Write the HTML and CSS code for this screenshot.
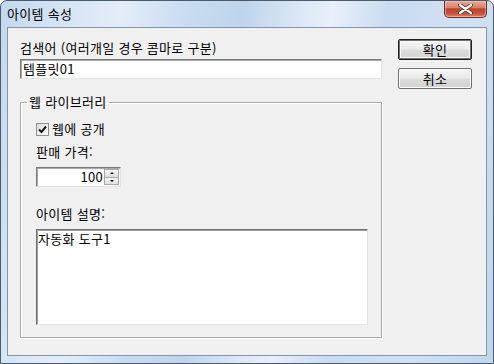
FILE: index.html
```html
<!DOCTYPE html>
<html lang="ko">
<head>
<meta charset="utf-8">
<title>아이템 속성</title>
<link rel="stylesheet" href="styles.css">
</head>
<body>
<div class="window">
  <div class="titlebar">
    <span class="title">아이템 속성</span>
    <span class="close">
      <svg width="17" height="10" viewBox="0 0 17 10">
        <path d="M3 1 L14 9 M14 1 L3 9" stroke="#5a2a22" stroke-width="4" stroke-linecap="round"/>
        <path d="M3 1 L14 9 M14 1 L3 9" stroke="#ffffff" stroke-width="2.2" stroke-linecap="round"/>
      </svg>
    </span>
  </div>
  <div class="client">
    <div class="main">
      <div class="label first">검색어 (여러개일 경우 콤마로 구분)</div>
      <div class="field">템플릿01</div>
      <fieldset class="group">
        <legend>웹 라이브러리</legend>
        <div class="check-row">
          <span class="checkbox">
            <svg width="9" height="9" viewBox="0 0 9 9"><path d="M1 4.5 L3.5 7 L8 1.5" fill="none" stroke="#1a1a1a" stroke-width="2"/></svg>
          </span>
          <span>웹에 공개</span>
        </div>
        <div class="label price">판매 가격:</div>
        <div class="spinner">
          <span class="spin-value">100</span>
          <span class="spin-buttons">
            <span class="spin-btn"><span class="tri-up"></span></span>
            <span class="spin-btn"><span class="tri-down"></span></span>
          </span>
        </div>
        <div class="label desc">아이템 설명:</div>
        <div class="memo">자동화 도구1</div>
      </fieldset>
    </div>
    <div class="buttons">
      <span class="btn default">확인</span>
      <span class="btn">취소</span>
    </div>
  </div>
</div>
</body>
</html>
```

FILE: styles.css
```css
html, body {
  margin: 0;
  padding: 0;
  background: #ffffff;
}

body {
  font-family: "Noto Sans CJK KR", "Noto Sans", sans-serif;
  font-size: 13px;
  letter-spacing: 0.3px;
  color: #000;
}

.window {
  width: 494px;
  height: 364px;
  box-sizing: border-box;
  border: 1px solid #4b5b6e;
  border-radius: 7px 7px 0 0;
  padding: 0 6px 7px 6px;
  display: flex;
  flex-direction: column;
  background:
    linear-gradient(100deg,
      #c3d8ee 0%, #d6e5f4 12%, #e3edf8 22%, #c8dcf0 34%,
      #bfd5ec 44%, #dde9f6 55%, #e8f0f9 60%, #c9dcf0 70%,
      #d0e1f2 85%, #c0d6ed 100%);
}

.titlebar {
  height: 26px;
  display: flex;
  justify-content: space-between;
  align-items: flex-start;
}

.title {
  line-height: 14px;
  margin-top: 6px;
  color: #000;
}

.close {
  width: 43px;
  height: 17px;
  box-sizing: border-box;
  border: 1px solid #6e3026;
  border-top: none;
  border-radius: 0 0 5px 5px;
  background: linear-gradient(#e8a896 0%, #d98770 40%, #c0412c 50%, #c85540 80%, #e08a72 100%);
  display: flex;
  align-items: center;
  justify-content: center;
  box-shadow: inset 0 0 0 1px rgba(255, 210, 200, 0.5);
}

.close svg {
  display: block;
}

.client {
  flex: 1;
  border: 1px solid #8595a8;
  background: #f0f0f0;
  display: flex;
  padding: 11px 14px 0 12px;
}

.main {
  width: 363px;
  display: flex;
  flex-direction: column;
  align-items: flex-start;
}

.label {
  line-height: 14px;
  height: 14px;
  white-space: nowrap;
}

.label.first {
  margin-top: 2px;
}

.field {
  margin-top: 4px;
  align-self: stretch;
  height: 20px;
  box-sizing: border-box;
  border: 1px solid;
  border-color: #7a7a7a #e3e3e3 #e3e3e3 #7a7a7a;
  box-shadow: inset 1px 1px 0 #a9a9a9;
  background: #fff;
  padding: 0 2px;
  line-height: 17px;
}

.group {
  margin: 16px 0 0 0;
  align-self: stretch;
  box-sizing: border-box;
  border: 1px solid #a8a8a8;
  box-shadow: 1px 1px 0 #ffffff, inset 1px 1px 0 #ffffff;
  padding: 12px 0 12px 15px;
  display: flex;
  flex-direction: column;
  align-items: flex-start;
  min-width: 0;
}

.group legend {
  line-height: 14px;
  padding: 0 2px;
  margin-left: -9px;
}

.check-row {
  display: flex;
  align-items: center;
  gap: 3px;
  height: 16px;
  line-height: 14px;
}

.checkbox {
  width: 13px;
  height: 13px;
  box-sizing: border-box;
  border: 1px solid #8e8f8f;
  background: linear-gradient(135deg, #dcdcdc, #ffffff);
  display: flex;
  align-items: center;
  justify-content: center;
}

.checkbox svg {
  display: block;
}

.label.price {
  margin-top: 8px;
}

.spinner {
  margin-top: 8px;
  width: 85px;
  height: 20px;
  box-sizing: border-box;
  border: 1px solid;
  border-color: #7a7a7a #e3e3e3 #e3e3e3 #7a7a7a;
  box-shadow: inset 1px 1px 0 #a9a9a9;
  background: #fff;
  display: flex;
  align-items: stretch;
  padding: 1px 1px 1px 2px;
}

.spin-value {
  flex: 1;
  text-align: right;
  line-height: 16px;
  padding-right: 1px;
}

.spin-buttons {
  width: 15px;
  display: flex;
  flex-direction: column;
}

.spin-btn {
  flex: 1;
  box-sizing: border-box;
  border: 1px solid #a7a7a7;
  background: linear-gradient(#f7f7f7, #dedede);
  display: flex;
  align-items: center;
  justify-content: center;
}

.spin-btn + .spin-btn {
  border-top: none;
}

.tri-up {
  width: 0;
  height: 0;
  border-left: 2px solid transparent;
  border-right: 2px solid transparent;
  border-bottom: 2px solid #000;
}

.tri-down {
  width: 0;
  height: 0;
  border-left: 2px solid transparent;
  border-right: 2px solid transparent;
  border-top: 2px solid #000;
}

.label.desc {
  margin-top: 20px;
}

.memo {
  margin-top: 8px;
  width: 332px;
  height: 96px;
  box-sizing: border-box;
  border: 1px solid;
  border-color: #6d6d6d #e3e3e3 #e3e3e3 #6d6d6d;
  box-shadow: inset 1px 1px 0 #a0a0a0;
  background: #fff;
  padding: 2px 1px;
  line-height: 14px;
}

.buttons {
  margin-left: 16px;
  display: flex;
  flex-direction: column;
  gap: 8px;
}

.btn {
  width: 74px;
  height: 21px;
  box-sizing: border-box;
  border: 1px solid #707070;
  border-radius: 2px;
  background: linear-gradient(#f6f6f6 0%, #eaeaea 48%, #dcdcdc 52%, #d2d2d2 100%);
  display: flex;
  align-items: center;
  justify-content: center;
  line-height: 14px;
  box-shadow: inset 0 0 0 1px #fcfcfc;
}

.btn.default {
  border: 1px solid #1e1e1e;
  box-shadow: inset 0 0 0 1px #6f6f6f, inset 0 0 0 2px #fafafa;
}
```
